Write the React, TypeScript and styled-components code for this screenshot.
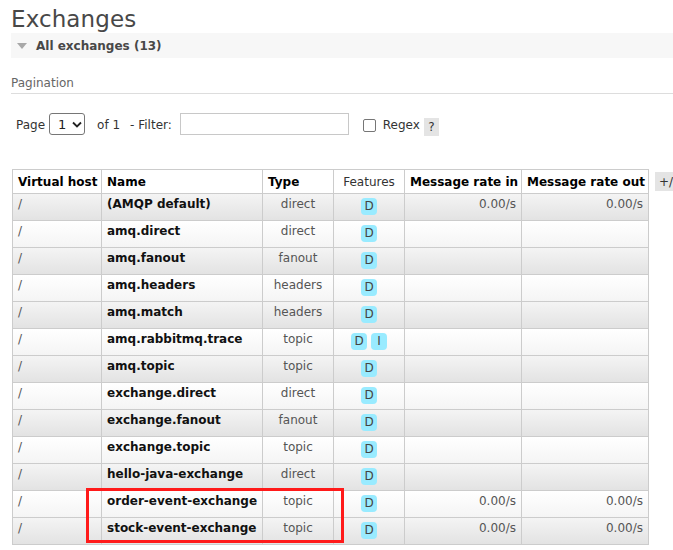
import React from "react";
import styled, { createGlobalStyle } from "styled-components";

const Global = createGlobalStyle`
  html, body { margin: 0; padding: 0; background: #fff; }
  body {
    font-family: "DejaVu Sans", Verdana, sans-serif;
    font-size: 12px;
    color: #484848;
    overflow: hidden;
  }
`;

const Page = styled.div`
  position: relative;
  width: 673px;
  height: 550px;
  padding-left: 11px;
  box-sizing: border-box;
  overflow: hidden;
`;

const Title = styled.h1`
  margin: 0;
  height: 33px;
  font-size: 23px;
  font-weight: normal;
  line-height: 38px;
  color: #484848;
  letter-spacing: 0.1px;
`;

const SectionBar = styled.div`
  height: 25px;
  background: #f7f7f7;
  display: flex;
  align-items: center;
  gap: 9px;
  padding-left: 6px;
  margin-right: -20px;
`;

const Triangle = styled.span`
  width: 0;
  height: 0;
  border-left: 5px solid transparent;
  border-right: 5px solid transparent;
  border-top: 6px solid #a8a8a8;
  margin-top: 1px;
`;

const SectionTitle = styled.span`
  font-weight: bold;
  font-size: 12px;
  color: #484848;
`;

const SubHeading = styled.h3`
  margin: 18px 0 0 0;
  height: 16px;
  font-size: 12px;
  font-weight: normal;
  color: #666;
  border-bottom: 1px solid #ddd;
  padding-bottom: 1px;
  margin-right: -20px;
`;

const Controls = styled.div`
  display: flex;
  align-items: center;
  height: 22px;
  margin-top: 19px;
  padding-left: 5px;
  font-size: 12px;
  color: #333;
`;

const Label = styled.span<{ $ml?: number }>`
  margin-left: ${(p) => p.$ml ?? 0}px;
  margin-top: 2px;
`;

const SelectBox = styled.div`
  margin-left: 4px;
  width: 36px;
  height: 22px;
  box-sizing: border-box;
  border: 1px solid #767676;
  border-radius: 3px;
  display: flex;
  align-items: center;
  padding-left: 8px;
  gap: 6px;
  font-size: 13px;
  color: #222;
`;

const TextInput = styled.input`
  margin-left: 8px;
  width: 169px;
  height: 22px;
  box-sizing: border-box;
  border: 1px solid #c8c8c8;
  padding: 0 4px;
  font-family: inherit;
  outline: none;
`;

const CheckBox = styled.span`
  margin-left: 14px;
  width: 13px;
  height: 13px;
  box-sizing: border-box;
  border: 1px solid #767676;
  border-radius: 2px;
  margin-top: 3px;
`;

const HelpBox = styled.span`
  margin-left: 4px;
  width: 15px;
  height: 18px;
  margin-top: 5px;
  background: #e4e4e4;
  display: flex;
  align-items: center;
  justify-content: center;
  font-size: 12px;
  color: #333;
`;

const TableArea = styled.div`
  margin-top: 34px;
  margin-left: 1px;
  display: flex;
  align-items: flex-start;
  gap: 6px;
`;

const Table = styled.table`
  border-collapse: collapse;
  table-layout: fixed;
  width: 636px;
  font-size: 12px;
`;

const Th = styled.th<{ $w: number; $bold?: boolean; $center?: boolean }>`
  width: ${(p) => p.$w}px;
  height: 24px;
  box-sizing: border-box;
  border: 1px solid #ccc;
  padding: 1px 5px 0 5px;
  font-weight: ${(p) => (p.$bold ? "bold" : "normal")};
  text-align: ${(p) => (p.$center ? "center" : "left")};
  color: ${(p) => (p.$bold ? "#000" : "#333")};
  white-space: nowrap;
  background: #fff;
`;

const Tr = styled.tr<{ $alt: boolean }>`
  background: ${(p) =>
    p.$alt
      ? "linear-gradient(to bottom, #f4f4f4 0%, #e2e2e2 100%)"
      : "linear-gradient(to bottom, #ffffff 0%, #f4f4f4 100%)"};
`;

const Td = styled.td<{ $align?: string; $bold?: boolean }>`
  height: 27px;
  box-sizing: border-box;
  border: 1px solid #ccc;
  padding: 3px 5px 0 5px;
  vertical-align: top;
  text-align: ${(p) => p.$align ?? "left"};
  font-weight: ${(p) => (p.$bold ? "bold" : "normal")};
  color: ${(p) => (p.$bold ? "#111" : "#555")};
  white-space: nowrap;
  line-height: 15px;
`;

const Badges = styled.div`
  display: flex;
  justify-content: center;
  gap: 4px;
  margin-top: 1px;
`;

const Badge = styled.span`
  display: inline-flex;
  align-items: center;
  justify-content: center;
  width: 16px;
  height: 17px;
  border-radius: 4px;
  background: #99ebff;
  color: #444;
  font-size: 12px;
`;

const ToggleBtn = styled.span`
  margin-top: 3px;
  height: 19px;
  padding: 0 4px;
  background: #e4e4e4;
  display: flex;
  align-items: center;
  font-size: 12px;
  color: #333;
  white-space: nowrap;
`;

const Highlight = styled.div`
  position: absolute;
  left: 86px;
  top: 488px;
  width: 258px;
  height: 55px;
  box-sizing: border-box;
  border: 3px solid #ff1a1a;
  pointer-events: none;
`;

type Row = {
  name: string;
  type: string;
  features: string[];
  rate?: boolean;
};

const rows: Row[] = [
  { name: "(AMQP default)", type: "direct", features: ["D"], rate: true },
  { name: "amq.direct", type: "direct", features: ["D"] },
  { name: "amq.fanout", type: "fanout", features: ["D"] },
  { name: "amq.headers", type: "headers", features: ["D"] },
  { name: "amq.match", type: "headers", features: ["D"] },
  { name: "amq.rabbitmq.trace", type: "topic", features: ["D", "I"] },
  { name: "amq.topic", type: "topic", features: ["D"] },
  { name: "exchange.direct", type: "direct", features: ["D"] },
  { name: "exchange.fanout", type: "fanout", features: ["D"] },
  { name: "exchange.topic", type: "topic", features: ["D"] },
  { name: "hello-java-exchange", type: "direct", features: ["D"] },
  { name: "order-event-exchange", type: "topic", features: ["D"], rate: true },
  { name: "stock-event-exchange", type: "topic", features: ["D"], rate: true },
];

const Chevron = () => (
  <svg width="10" height="7" viewBox="0 0 10 7">
    <path d="M1 1.5 L5 5.5 L9 1.5" fill="none" stroke="#222" strokeWidth="1.8" />
  </svg>
);

export default function App() {
  return (
    <Page>
      <Global />
      <Title>Exchanges</Title>
      <SectionBar>
        <Triangle />
        <SectionTitle>All exchanges (13)</SectionTitle>
      </SectionBar>
      <SubHeading>Pagination</SubHeading>
      <Controls>
        <Label>Page</Label>
        <SelectBox>
          1 <Chevron />
        </SelectBox>
        <Label $ml={12}>of 1</Label>
        <Label $ml={10}>- Filter:</Label>
        <TextInput />
        <CheckBox />
        <Label $ml={7}>Regex</Label>
        <HelpBox>?</HelpBox>
      </Controls>
      <TableArea>
        <Table>
          <thead>
            <tr>
              <Th $w={89} $bold>Virtual host</Th>
              <Th $w={161} $bold>Name</Th>
              <Th $w={71} $bold>Type</Th>
              <Th $w={71} $center>Features</Th>
              <Th $w={117} $bold>Message rate in</Th>
              <Th $w={127} $bold>Message rate out</Th>
            </tr>
          </thead>
          <tbody>
            {rows.map((r, i) => (
              <Tr key={r.name} $alt={i % 2 === 0}>
                <Td>/</Td>
                <Td $bold>{r.name}</Td>
                <Td $align="center">{r.type}</Td>
                <Td $align="center">
                  <Badges>
                    {r.features.map((f) => (
                      <Badge key={f}>{f}</Badge>
                    ))}
                  </Badges>
                </Td>
                <Td $align="right">{r.rate ? "0.00/s" : ""}</Td>
                <Td $align="right">{r.rate ? "0.00/s" : ""}</Td>
              </Tr>
            ))}
          </tbody>
        </Table>
        <ToggleBtn>+/-</ToggleBtn>
      </TableArea>
      <Highlight />
    </Page>
  );
}
